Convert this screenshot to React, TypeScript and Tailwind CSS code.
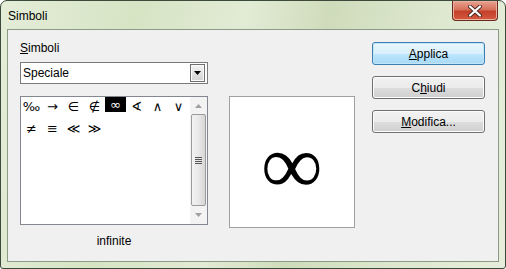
import React from "react";

const FONT = { fontFamily: '"Liberation Sans", Arial, sans-serif' };
const SYM = { fontFamily: '"DejaVu Sans", sans-serif' };

const symbols = ["‰", "→", "∈", "∉", "∞", "∢", "∧", "∨", "≠", "≡", "≪", "≫"];

function DialogButton({
	children,
	focused,
}: {
	children: React.ReactNode;
	focused?: boolean;
}) {
	return (
		<div
			className={
				"flex h-[23px] w-[113px] items-center justify-center rounded-[3px] border text-[12px] text-black " +
				(focused
					? "border-[#3c7fb1] bg-[linear-gradient(to_bottom,#eaf6fd_0%,#d9f0fc_50%,#bee6fd_51%,#a7d9f5_100%)] shadow-[inset_0_0_0_1px_#c4e5f6]"
					: "border-[#707070] bg-[linear-gradient(to_bottom,#f2f2f2_0%,#ebebeb_50%,#dddddd_51%,#cfcfcf_100%)] shadow-[inset_0_0_0_1px_#fcfcfc]")
			}
		>
			{children}
		</div>
	);
}

function CloseButton() {
	return (
		<div className="flex h-[20px] w-[46px] items-center justify-center rounded-b-[4px] border border-t-0 border-[#6b2a1e] bg-[linear-gradient(to_bottom,#e8a392_0%,#d6705a_45%,#c4402a_55%,#d65a3e_100%)] shadow-[inset_0_0_0_1px_#eab0a2]">
			<svg width="14" height="12" viewBox="0 0 14 12">
				<path
					d="M2 1.5 L12 10.5 M12 1.5 L2 10.5"
					stroke="#4a2a22"
					strokeWidth="4"
					strokeLinecap="round"
				/>
				<path
					d="M2 1.5 L12 10.5 M12 1.5 L2 10.5"
					stroke="#ffffff"
					strokeWidth="2.2"
					strokeLinecap="round"
				/>
			</svg>
		</div>
	);
}

function SymbolGrid() {
	return (
		<div className="mt-[12px] flex h-[129px] w-[188px] border border-[#828790] bg-white">
			<div className="grid flex-1 grid-cols-[repeat(8,21px)] content-start">
				{symbols.map((s, i) => (
					<div key={i} className="relative flex h-[22px] items-start justify-center">
						{i === 4 ? (
							<div className="flex h-[15px] w-[21px] items-center justify-center bg-black text-[13px] leading-none text-white" style={SYM}>
								{s}
							</div>
						) : (
							<span className="mt-[3px] text-[13px] leading-[14px] text-black" style={SYM}>
								{s}
							</span>
						)}
					</div>
				))}
			</div>
			<div className="flex w-[17px] flex-col bg-[#f3f3f3]">
				<div className="flex h-[17px] items-center justify-center">
					<svg width="7" height="4" viewBox="0 0 7 4">
						<path d="M0 4 L3.5 0 L7 4 Z" fill="#a0a0a0" />
					</svg>
				</div>
				<div className="mx-[1px] flex flex-1 items-center justify-center rounded-[2px] border border-[#9b9b9b] bg-[linear-gradient(to_right,#f3f3f3,#e8e8e8_50%,#d6d6d6)]">
					<div className="flex flex-col gap-[1px]">
						<div className="h-[1px] w-[7px] bg-[#555]" />
						<div className="h-[1px] w-[7px] bg-[#555]" />
						<div className="h-[1px] w-[7px] bg-[#555]" />
						<div className="h-[1px] w-[7px] bg-[#555]" />
					</div>
				</div>
				<div className="flex h-[18px] items-center justify-center">
					<svg width="7" height="4" viewBox="0 0 7 4">
						<path d="M0 0 L7 0 L3.5 4 Z" fill="#a0a0a0" />
					</svg>
				</div>
			</div>
		</div>
	);
}

export default function App() {
	return (
		<div className="h-[269px] w-[506px] bg-white" style={FONT}>
			<div className="flex h-full w-full flex-col rounded-t-[7px] rounded-b-[3px] border border-[#3b4a3a] bg-[linear-gradient(100deg,#e4edd8_0%,#d6e4c4_25%,#e2ebd5_45%,#cfdcbb_60%,#dde8cf_80%,#e6eedb_100%)]">
				<div className="flex h-[28px] items-start justify-between pl-[7px] pr-[7px]">
					<span className="mt-[6px] text-[12px] text-black">Simboli</span>
					<CloseButton />
				</div>
				<div className="mx-[6px] mb-[6px] flex flex-1 border border-[#8d9a85] bg-[#f0f0f0] pl-[12px]">
					<div className="flex w-[188px] flex-col">
						<span className="mt-[11px] h-[14px] text-[12px] leading-[14px] text-black">
							<span className="underline">S</span>imboli
						</span>
						<div className="mt-[7px] flex h-[22px] items-center border border-[#7a7a7a] bg-white pl-[2px] pr-[2px]">
							<span className="flex-1 text-[12px] text-black">Speciale</span>
							<div className="flex h-[18px] w-[15px] items-center justify-center border border-[#6f6f6f] bg-[linear-gradient(to_bottom,#f4f4f4,#e2e2e2_50%,#d2d2d2)] shadow-[inset_0_0_0_1px_#fafafa]">
								<svg width="7" height="4" viewBox="0 0 7 4">
									<path d="M0 0 L7 0 L3.5 4 Z" fill="#000" />
								</svg>
							</div>
						</div>
						<SymbolGrid />
						<span className="mt-[9px] text-center text-[12px] leading-[14px] text-black">
							infinite
						</span>
					</div>
					<div className="ml-[21px] mt-[66px] flex h-[132px] w-[126px] items-center justify-center border border-[#a0a0a0] bg-white">
						<span
							className="mt-[6px] text-[84px] font-bold leading-none text-black"
							style={{ fontFamily: '"Liberation Serif", serif' }}
						>
							∞
						</span>
					</div>
					<div className="ml-[17px] mt-[12px] flex flex-col gap-[11px]">
						<DialogButton focused>
							<span className="underline">A</span>pplica
						</DialogButton>
						<DialogButton>
							C<span className="underline">h</span>iudi
						</DialogButton>
						<DialogButton>
							<span className="underline">M</span>odifica...
						</DialogButton>
					</div>
				</div>
			</div>
		</div>
	);
}
